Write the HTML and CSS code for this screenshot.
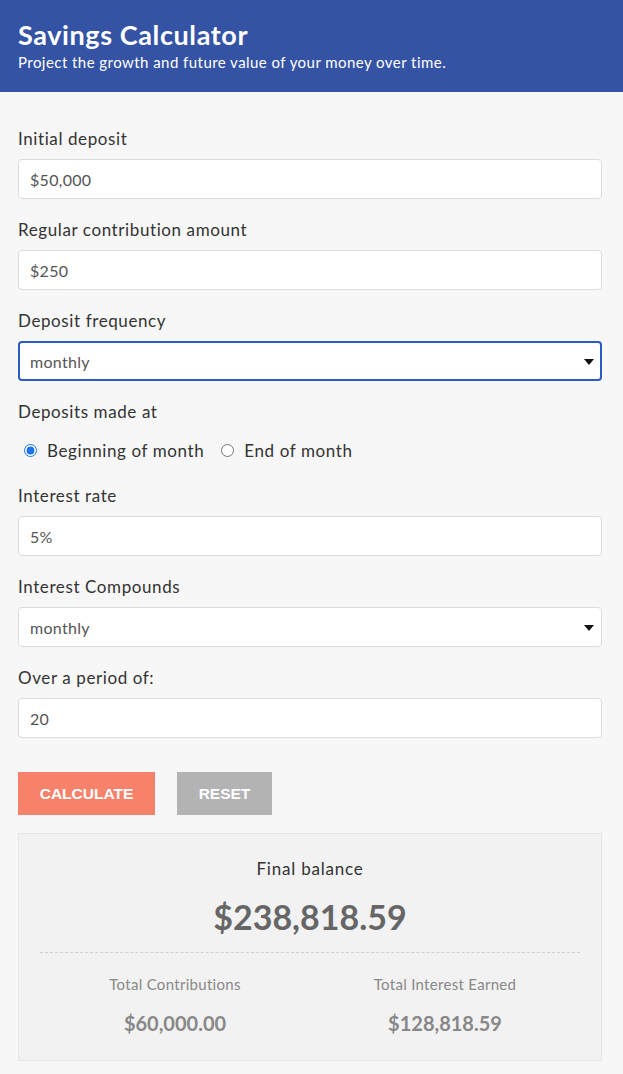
FILE: index.html
```html
<!DOCTYPE html>
<html>
<head>
<meta charset="utf-8">
<link rel="stylesheet" href="styles.css">
</head>
<body>
<header class="hero">
  <h1 class="title">Savings Calculator</h1>
  <p class="subtitle">Project the growth and future value of your money over time.</p>
</header>
<main class="form">
  <div class="field">
    <label class="label">Initial deposit</label>
    <input class="input" type="text" value="$50,000">
  </div>
  <div class="field">
    <label class="label">Regular contribution amount</label>
    <input class="input" type="text" value="$250">
  </div>
  <div class="field">
    <label class="label">Deposit frequency</label>
    <div class="select-wrap">
      <select class="input select focused"><option>monthly</option></select>
    </div>
  </div>
  <div class="field">
    <label class="label">Deposits made at</label>
    <div class="radios">
      <label class="radio"><input type="radio" name="at" checked> Beginning of month</label>
      <label class="radio"><input type="radio" name="at"> End of month</label>
    </div>
  </div>
  <div class="field">
    <label class="label">Interest rate</label>
    <input class="input" type="text" value="5%">
  </div>
  <div class="field">
    <label class="label">Interest Compounds</label>
    <div class="select-wrap">
      <select class="input select"><option>monthly</option></select>
    </div>
  </div>
  <div class="field">
    <label class="label">Over a period of:</label>
    <input class="input" type="text" value="20">
  </div>
  <div class="buttons">
    <button class="btn btn-calc">CALCULATE</button>
    <button class="btn btn-reset">RESET</button>
  </div>
  <section class="result">
    <div class="result-label">Final balance</div>
    <div class="result-value">$238,818.59</div>
    <div class="divider"></div>
    <div class="totals">
      <div class="total">
        <div class="total-label">Total Contributions</div>
        <div class="total-value">$60,000.00</div>
      </div>
      <div class="total">
        <div class="total-label">Total Interest Earned</div>
        <div class="total-value">$128,818.59</div>
      </div>
    </div>
  </section>
</main>
</body>
</html>
```
FILE: styles.css
```css
* { box-sizing: border-box; }
html, body { margin: 0; padding: 0; }
body {
  background: #f7f7f7;
  font-family: Lato, "Noto Sans", sans-serif;
  color: #333;
}
.hero {
  background: #3553a4;
  color: #fff;
  height: 92px;
  padding: 19px 18px 0;
}
.title {
  margin: 0;
  font-size: 27px;
  font-weight: 700;
  line-height: 32px;
  letter-spacing: 0.6px;
}
.subtitle {
  margin: 2px 0 0;
  font-size: 15px;
  line-height: 18px;
  letter-spacing: 0.45px;
}
.form { padding: 0 21px 14px 18px; }
.field { display: flex; flex-direction: column; }
.field:first-child { margin-top: 36px; }
.label {
  font-size: 17px;
  line-height: 22px;
  letter-spacing: 0.6px;
  color: #333;
  margin-bottom: 9px;
}
.input {
  height: 40px;
  width: 100%;
  border: 1px solid #dcdcdc;
  border-radius: 4px;
  background: #fff;
  padding: 0 11px;
  font-family: Lato, "Noto Sans", sans-serif;
  font-size: 16px;
  letter-spacing: 0.3px;
  color: #555;
  margin-bottom: 20px;
  outline: none;
}
.select-wrap { position: relative; }
.select {
  appearance: none;
  -webkit-appearance: none;
  display: block;
}
.select-wrap::after {
  content: "";
  position: absolute;
  right: 8px;
  top: 18px;
  border-left: 5px solid transparent;
  border-right: 5px solid transparent;
  border-top: 6px solid #111;
}
.focused { border: 2px solid #2b5cc4; padding-left: 10px; }
.radios {
  display: flex;
  gap: 17px;
  height: 24px;
  align-items: center;
  margin-top: 6px;
  margin-bottom: 23px;
  padding-left: 6px;
}
.radio {
  display: flex;
  align-items: center;
  gap: 10px;
  font-size: 17px;
  letter-spacing: 0.6px;
  color: #333;
}
.radio input {
  margin: 0;
  width: 13px;
  height: 13px;
  accent-color: #1a73e8;
}
.buttons {
  display: flex;
  gap: 22px;
  margin-top: 14px;
}
.btn {
  border: none;
  height: 43px;
  font-family: "Liberation Sans", Arial, sans-serif;
  font-weight: 700;
  font-size: 15.5px;
  color: #fff;
  padding: 0;
}
.btn-calc { background: #f7826b; width: 137px; }
.btn-reset { background: #b3b3b3; width: 95px; }
.result {
  margin-top: 18px;
  background: #f2f2f2;
  border: 1px solid #e6e6e6;
  padding: 24px 21px 26px;
  text-align: center;
}
.result-label {
  font-size: 17px;
  letter-spacing: 0.8px;
  line-height: 22px;
  color: #333;
}
.result-value {
  margin-top: 16px;
  font-size: 34px;
  font-weight: 700;
  color: #666;
  line-height: 42px;
}
.divider {
  margin-top: 14px;
  border-top: 1px dashed #cfcfcf;
}
.totals {
  display: flex;
  margin-top: 21px;
}
.total { flex: 1; }
.total-label {
  font-size: 15px;
  letter-spacing: 0.3px;
  line-height: 20px;
  color: #888;
}
.total-value {
  margin-top: 18px;
  font-size: 20px;
  font-weight: 700;
  color: #888;
  line-height: 22px;
}
```
